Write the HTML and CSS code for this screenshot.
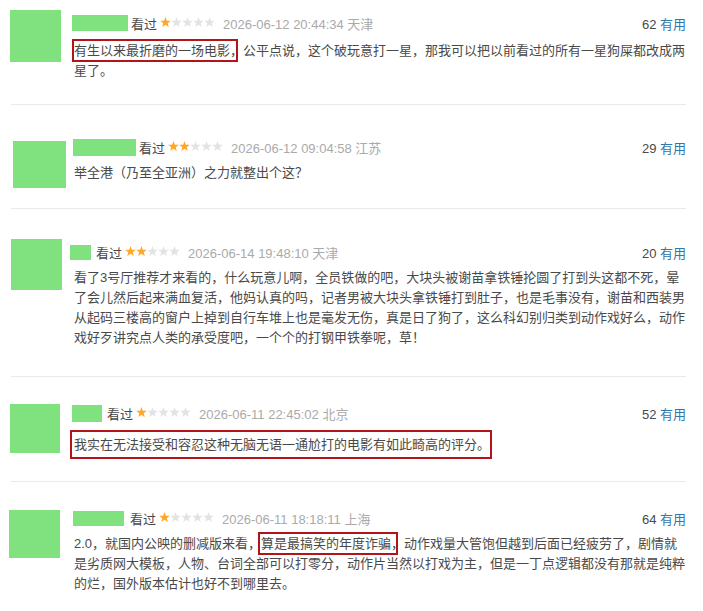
FILE: index.html
```html
<!DOCTYPE html>
<html lang="zh-CN">
<head>
<meta charset="utf-8">
<title>短评</title>
<link rel="stylesheet" href="styles.css">
</head>
<body>
<div class="list">

  <div class="review r1">
    <div class="side"><div class="avatar a1"></div></div>
    <div class="main">
      <div class="info">
        <span class="name n1"></span>
        <span class="seen">看过</span>
        <svg class="stars" width="55" height="11" viewBox="0 0 55 11"><polygon class="on" points="5.5,0 6.85,3.64 10.83,3.77 7.69,6.21 8.79,10.03 5.5,7.8 2.21,10.03 3.31,6.21 0.17,3.77 4.15,3.64"/><polygon class="off" transform="translate(11 0)" points="5.5,0 6.85,3.64 10.83,3.77 7.69,6.21 8.79,10.03 5.5,7.8 2.21,10.03 3.31,6.21 0.17,3.77 4.15,3.64"/><polygon class="off" transform="translate(22 0)" points="5.5,0 6.85,3.64 10.83,3.77 7.69,6.21 8.79,10.03 5.5,7.8 2.21,10.03 3.31,6.21 0.17,3.77 4.15,3.64"/><polygon class="off" transform="translate(33 0)" points="5.5,0 6.85,3.64 10.83,3.77 7.69,6.21 8.79,10.03 5.5,7.8 2.21,10.03 3.31,6.21 0.17,3.77 4.15,3.64"/><polygon class="off" transform="translate(44 0)" points="5.5,0 6.85,3.64 10.83,3.77 7.69,6.21 8.79,10.03 5.5,7.8 2.21,10.03 3.31,6.21 0.17,3.77 4.15,3.64"/></svg>
        <span class="time">2026-06-12 20:44:34 天津</span>
        <span class="votes">62 <span class="useful">有用</span></span>
      </div>
      <p class="text t1"><span class="mark m1">有生以来最折磨的一场电影，</span>公平点说，这个破玩意打一星，那我可以把以前看过的所有一星狗屎都改成两星了。</p>
    </div>
  </div>

  <div class="review r2">
    <div class="side"><div class="avatar a2"></div></div>
    <div class="main">
      <div class="info">
        <span class="name n2"></span>
        <span class="seen">看过</span>
        <svg class="stars" width="55" height="11" viewBox="0 0 55 11"><polygon class="on" points="5.5,0 6.85,3.64 10.83,3.77 7.69,6.21 8.79,10.03 5.5,7.8 2.21,10.03 3.31,6.21 0.17,3.77 4.15,3.64"/><polygon class="on" transform="translate(11 0)" points="5.5,0 6.85,3.64 10.83,3.77 7.69,6.21 8.79,10.03 5.5,7.8 2.21,10.03 3.31,6.21 0.17,3.77 4.15,3.64"/><polygon class="off" transform="translate(22 0)" points="5.5,0 6.85,3.64 10.83,3.77 7.69,6.21 8.79,10.03 5.5,7.8 2.21,10.03 3.31,6.21 0.17,3.77 4.15,3.64"/><polygon class="off" transform="translate(33 0)" points="5.5,0 6.85,3.64 10.83,3.77 7.69,6.21 8.79,10.03 5.5,7.8 2.21,10.03 3.31,6.21 0.17,3.77 4.15,3.64"/><polygon class="off" transform="translate(44 0)" points="5.5,0 6.85,3.64 10.83,3.77 7.69,6.21 8.79,10.03 5.5,7.8 2.21,10.03 3.31,6.21 0.17,3.77 4.15,3.64"/></svg>
        <span class="time">2026-06-12 09:04:58 江苏</span>
        <span class="votes">29 <span class="useful">有用</span></span>
      </div>
      <p class="text t2">举全港（乃至全亚洲）之力就整出个这？</p>
    </div>
  </div>

  <div class="review r3">
    <div class="side"><div class="avatar a3"></div></div>
    <div class="main">
      <div class="info">
        <span class="name n3"></span>
        <span class="seen">看过</span>
        <svg class="stars" width="55" height="11" viewBox="0 0 55 11"><polygon class="on" points="5.5,0 6.85,3.64 10.83,3.77 7.69,6.21 8.79,10.03 5.5,7.8 2.21,10.03 3.31,6.21 0.17,3.77 4.15,3.64"/><polygon class="on" transform="translate(11 0)" points="5.5,0 6.85,3.64 10.83,3.77 7.69,6.21 8.79,10.03 5.5,7.8 2.21,10.03 3.31,6.21 0.17,3.77 4.15,3.64"/><polygon class="off" transform="translate(22 0)" points="5.5,0 6.85,3.64 10.83,3.77 7.69,6.21 8.79,10.03 5.5,7.8 2.21,10.03 3.31,6.21 0.17,3.77 4.15,3.64"/><polygon class="off" transform="translate(33 0)" points="5.5,0 6.85,3.64 10.83,3.77 7.69,6.21 8.79,10.03 5.5,7.8 2.21,10.03 3.31,6.21 0.17,3.77 4.15,3.64"/><polygon class="off" transform="translate(44 0)" points="5.5,0 6.85,3.64 10.83,3.77 7.69,6.21 8.79,10.03 5.5,7.8 2.21,10.03 3.31,6.21 0.17,3.77 4.15,3.64"/></svg>
        <span class="time">2026-06-14 19:48:10 天津</span>
        <span class="votes">20 <span class="useful">有用</span></span>
      </div>
      <p class="text t3">看了3号厅推荐才来看的，什么玩意儿啊，全员铁做的吧，大块头被谢苗拿铁锤抡圆了打到头这都不死，晕了会儿然后起来满血复活，他妈认真的吗，记者男被大块头拿铁锤打到肚子，也是毛事没有，谢苗和西装男从起码三楼高的窗户上掉到自行车堆上也是毫发无伤，真是日了狗了，这么科幻别归类到动作戏好么，动作戏好歹讲究点人类的承受度吧，一个个的打钢甲铁拳呢，草！</p>
    </div>
  </div>

  <div class="review r4">
    <div class="side"><div class="avatar a4"></div></div>
    <div class="main">
      <div class="info">
        <span class="name n4"></span>
        <span class="seen">看过</span>
        <svg class="stars" width="55" height="11" viewBox="0 0 55 11"><polygon class="on" points="5.5,0 6.85,3.64 10.83,3.77 7.69,6.21 8.79,10.03 5.5,7.8 2.21,10.03 3.31,6.21 0.17,3.77 4.15,3.64"/><polygon class="off" transform="translate(11 0)" points="5.5,0 6.85,3.64 10.83,3.77 7.69,6.21 8.79,10.03 5.5,7.8 2.21,10.03 3.31,6.21 0.17,3.77 4.15,3.64"/><polygon class="off" transform="translate(22 0)" points="5.5,0 6.85,3.64 10.83,3.77 7.69,6.21 8.79,10.03 5.5,7.8 2.21,10.03 3.31,6.21 0.17,3.77 4.15,3.64"/><polygon class="off" transform="translate(33 0)" points="5.5,0 6.85,3.64 10.83,3.77 7.69,6.21 8.79,10.03 5.5,7.8 2.21,10.03 3.31,6.21 0.17,3.77 4.15,3.64"/><polygon class="off" transform="translate(44 0)" points="5.5,0 6.85,3.64 10.83,3.77 7.69,6.21 8.79,10.03 5.5,7.8 2.21,10.03 3.31,6.21 0.17,3.77 4.15,3.64"/></svg>
        <span class="time">2026-06-11 22:45:02 北京</span>
        <span class="votes">52 <span class="useful">有用</span></span>
      </div>
      <p class="text t4"><span class="boxed">我实在无法接受和容忍这种无脑无语一通尬打的电影有如此畸高的评分。</span></p>
    </div>
  </div>

  <div class="review r5">
    <div class="side"><div class="avatar a5"></div></div>
    <div class="main">
      <div class="info">
        <span class="name n5"></span>
        <span class="seen">看过</span>
        <svg class="stars" width="55" height="11" viewBox="0 0 55 11"><polygon class="on" points="5.5,0 6.85,3.64 10.83,3.77 7.69,6.21 8.79,10.03 5.5,7.8 2.21,10.03 3.31,6.21 0.17,3.77 4.15,3.64"/><polygon class="off" transform="translate(11 0)" points="5.5,0 6.85,3.64 10.83,3.77 7.69,6.21 8.79,10.03 5.5,7.8 2.21,10.03 3.31,6.21 0.17,3.77 4.15,3.64"/><polygon class="off" transform="translate(22 0)" points="5.5,0 6.85,3.64 10.83,3.77 7.69,6.21 8.79,10.03 5.5,7.8 2.21,10.03 3.31,6.21 0.17,3.77 4.15,3.64"/><polygon class="off" transform="translate(33 0)" points="5.5,0 6.85,3.64 10.83,3.77 7.69,6.21 8.79,10.03 5.5,7.8 2.21,10.03 3.31,6.21 0.17,3.77 4.15,3.64"/><polygon class="off" transform="translate(44 0)" points="5.5,0 6.85,3.64 10.83,3.77 7.69,6.21 8.79,10.03 5.5,7.8 2.21,10.03 3.31,6.21 0.17,3.77 4.15,3.64"/></svg>
        <span class="time">2026-06-11 18:18:11 上海</span>
        <span class="votes">64 <span class="useful">有用</span></span>
      </div>
      <p class="text t5">2.0，就国内公映的删减版来看，<span class="mark m5">算是最搞笑的年度诈骗，</span>动作戏量大管饱但越到后面已经疲劳了，剧情就是劣质网大模板，人物、台词全部可以打零分，动作片当然以打戏为主，但是一丁点逻辑都没有那就是纯粹的烂，国外版本估计也好不到哪里去。</p>
    </div>
  </div>

</div>
</body>
</html>
```

FILE: styles.css
```css
html, body {
  margin: 0;
  padding: 0;
  background: #fff;
}

body {
  font-family: "Liberation Sans", "Noto Sans CJK SC", sans-serif;
  color: #494949;
  font-size: 13px;
}

.list {
  margin: 0 17px 0 11px;
}

.review {
  display: flex;
  align-items: flex-start;
  border-bottom: 1px solid #eaeaea;
}

.side {
  width: 63px;
  flex: none;
}

.avatar {
  background: #80e27e;
}

.main {
  flex: 1;
  min-width: 0;
}

.info {
  display: flex;
  align-items: center;
  height: 20px;
  white-space: nowrap;
}

.name {
  display: block;
  background: #80e27e;
  flex: none;
}

.seen {
  font-size: 13px;
  color: #494949;
  margin-right: 3px;
}

.stars {
  display: block;
  flex: none;
  margin-right: 8px;
  margin-top: -1px;
}

.stars .on { fill: #ffa726; }
.stars .off { fill: #e3e3e3; }

.time {
  font-size: 13px;
  color: #aaa;
}

.votes {
  margin-left: auto;
  font-size: 13px;
  color: #494949;
}

.useful {
  color: #3377aa;
}

.text {
  margin: 0;
  line-height: 20px;
  font-size: 13px;
  color: #494949;
}

.mark {
  position: relative;
}

.mark::after {
  content: "";
  position: absolute;
  top: -4px;
  bottom: -4px;
  left: -2px;
  right: 5px;
  border: 2px solid #b2141a;
}

.m5::after {
  left: -3px;
  right: 6px;
}

.boxed {
  display: inline-block;
  border: 2px solid #b2141a;
  padding: 3px 0 2px 2px;
  margin-left: -4px;
}

/* review 1 */
.r1 { padding: 13px 0 23px; }
.a1 { width: 51px; height: 52px; margin: -3px 0 0 -1px; }
.n1 { width: 56px; height: 16px; margin: 0 3px 0 -2px; }
.t1 { margin-top: 8px; }

/* review 2 */
.r2 { padding: 32px 0 20px; }
.a2 { width: 53px; height: 47px; margin: 4px 0 0 2px; }
.n2 { width: 63px; height: 17px; margin: 0 3px 0 -1px; }
.t2 { margin-top: 6px; }

/* review 3 */
.r3 { padding: 33px 0 28px; }
.a3 { width: 51px; height: 51px; margin: -3px 0 0 0; }
.n3 { width: 21px; height: 15px; margin: 0 5px 0 -4px; }
.t3 { margin-top: 6px; }

/* review 4 */
.r4 { padding: 26px 0 22px; }
.a4 { width: 50px; height: 49px; margin: 1px 0 0 -1px; }
.n4 { width: 30px; height: 17px; margin: 0 5px 0 -2px; }
.t4 { margin-top: 7px; }

/* review 5 */
.r5 { padding: 26px 0 20px; border-bottom: none; }
.a5 { width: 51px; height: 48px; margin: 2px 0 0 -2px; }
.n5 { width: 51px; height: 15px; margin: 0 6px 0 -1px; }
.t5 { margin-top: 6px; }
```
